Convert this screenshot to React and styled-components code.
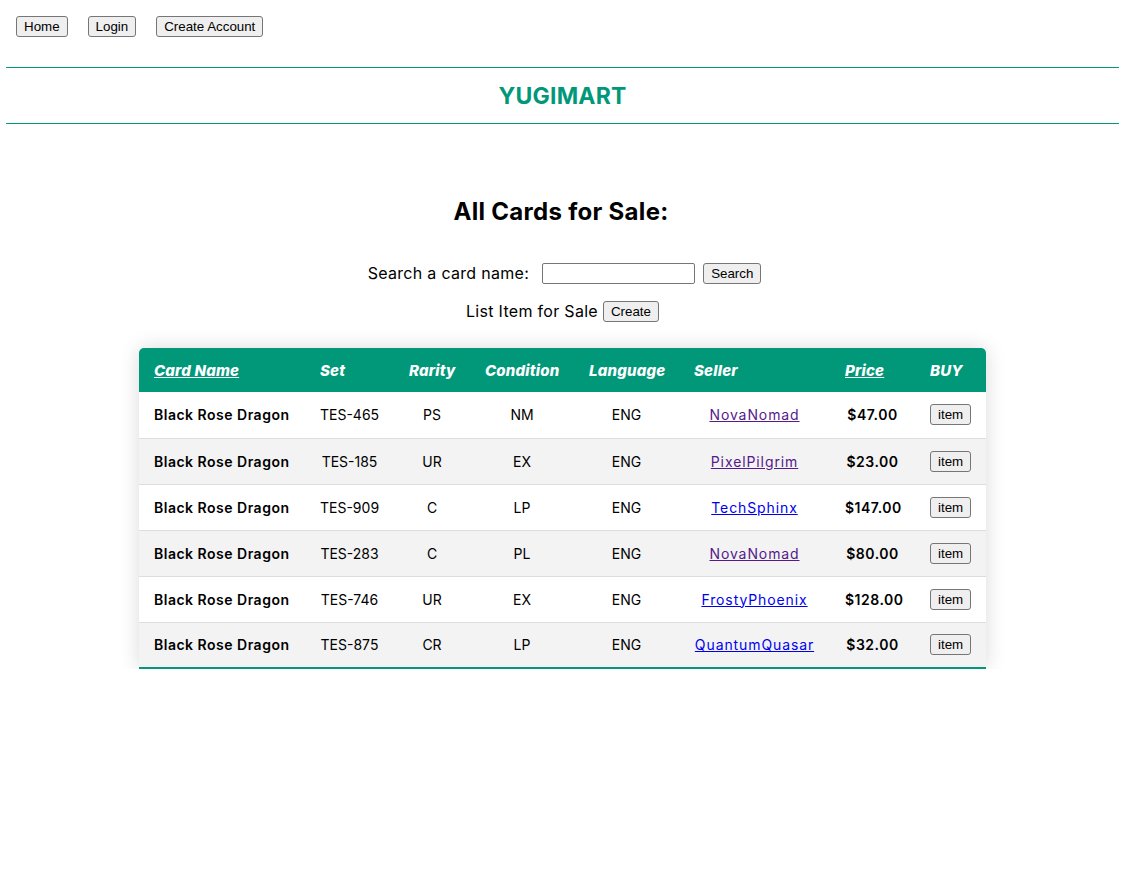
import React from "react";
import styled, { createGlobalStyle } from "styled-components";

const GlobalStyle = createGlobalStyle`
  html, body { margin: 0; padding: 0; background: #ffffff; }
  body {
    font-family: Inter, "Open Sans", "Liberation Sans", sans-serif;
    color: #000000;
  }
`;

const TEAL = "#009879";

const Nav = styled.nav`
  display: flex;
  gap: 20px;
  padding: 16px 16px 30px 16px;
`;

const NativeButton = styled.button`
  font-family: "Liberation Sans", Arial, sans-serif;
  font-size: 13.33px;
  line-height: 15px;
  height: 21px;
  padding: 1px 7px;
  border: 1px solid #767676;
  border-radius: 3px;
  background: #efefef;
  color: #000000;
  cursor: pointer;
  box-sizing: border-box;
`;

const Banner = styled.header`
  margin: 0 3px 0 6px;
  height: 55px;
  border-top: 1px solid ${TEAL};
  border-bottom: 1px solid ${TEAL};
  display: flex;
  align-items: center;
  justify-content: center;
`;

const Brand = styled.h1`
  margin: 0;
  font-size: 23px;
  font-weight: 700;
  color: ${TEAL};
  letter-spacing: 0.2px;
`;

const Main = styled.main`
  display: flex;
  flex-direction: column;
  align-items: center;
`;

const Title = styled.h2`
  margin: 70px 0 0 0;
  font-size: 24px;
  line-height: 36px;
  font-weight: 700;
  letter-spacing: 0.3px;
`;

const FormRow = styled.div`
  display: flex;
  align-items: center;
  justify-content: center;
  gap: ${(p) => p.$gap || 8}px;
  margin-top: ${(p) => p.$top || 0}px;
  margin-left: ${(p) => p.$shift || 0}px;
  height: 22px;
  font-size: 16px;
  letter-spacing: 0.3px;
`;

const Label = styled.span`
  margin-right: ${(p) => p.$extra || 0}px;
`;

const TextInput = styled.input`
  width: 153px;
  height: 21px;
  box-sizing: border-box;
  border: 1px solid #767676;
  border-radius: 2px;
  padding: 1px 2px;
  font-size: 13.33px;
`;

const Table = styled.table`
  margin: 26px 0 0 3px;
  width: 847px;
  table-layout: fixed;
  border-collapse: collapse;
  border-radius: 5px 5px 0 0;
  overflow: hidden;
  box-shadow: 0 0 20px rgba(0, 0, 0, 0.15);
  font-size: 14px;
`;

const HeadRow = styled.tr`
  background: ${TEAL};
  color: #ffffff;
  height: 44px;
`;

const Th = styled.th`
  padding: 0 15px;
  text-align: left;
  font-size: 15px;
  font-weight: 800;
  font-style: italic;
  letter-spacing: 0.2px;
  text-decoration: ${(p) => (p.$sort ? "underline" : "none")};
  white-space: nowrap;
`;

const BodyRow = styled.tr`
  height: 46px;
  background: ${(p) => (p.$even ? "#f3f3f3" : "#ffffff")};
  border-bottom: ${(p) => (p.$last ? `2px solid ${TEAL}` : "1px solid #dddddd")};
`;

const Td = styled.td`
  padding: 0 15px;
  text-align: ${(p) => (p.$left ? "left" : "center")};
  font-weight: ${(p) => (p.$bold ? 600 : 400)};
  letter-spacing: ${(p) => (p.$bold ? "0.5px" : "0")};
  white-space: nowrap;
`;

const SellerLink = styled.a`
  color: ${(p) => (p.$visited ? "#551a8b" : "#0000ee")};
  text-decoration: underline;
  letter-spacing: 0.9px;
`;

const widths = [166, 89, 76, 104, 105, 151, 85, 71];

const rows = [
  { set: "TES-465", rarity: "PS", cond: "NM", seller: "NovaNomad", visited: true, price: "$47.00" },
  { set: "TES-185", rarity: "UR", cond: "EX", seller: "PixelPilgrim", visited: true, price: "$23.00" },
  { set: "TES-909", rarity: "C", cond: "LP", seller: "TechSphinx", visited: false, price: "$147.00" },
  { set: "TES-283", rarity: "C", cond: "PL", seller: "NovaNomad", visited: true, price: "$80.00" },
  { set: "TES-746", rarity: "UR", cond: "EX", seller: "FrostyPhoenix", visited: false, price: "$128.00" },
  { set: "TES-875", rarity: "CR", cond: "LP", seller: "QuantumQuasar", visited: false, price: "$32.00" },
];

export default function App() {
  return (
    <>
      <GlobalStyle />
      <Nav>
        <NativeButton>Home</NativeButton>
        <NativeButton>Login</NativeButton>
        <NativeButton>Create Account</NativeButton>
      </Nav>
      <Banner>
        <Brand>YUGIMART</Brand>
      </Banner>
      <Main>
        <Title>All Cards for Sale:</Title>
        <FormRow $top={32} $gap={8} $shift={7}>
          <Label $extra={5}>Search a card name:</Label>
          <TextInput type="text" />
          <NativeButton>Search</NativeButton>
        </FormRow>
        <FormRow $top={16} $gap={5} $shift={3}>
          <Label>List Item for Sale</Label>
          <NativeButton>Create</NativeButton>
        </FormRow>
        <Table>
          <colgroup>
            {widths.map((w, i) => (
              <col key={i} style={{ width: w }} />
            ))}
          </colgroup>
          <thead>
            <HeadRow>
              <Th $sort>Card Name</Th>
              <Th>Set</Th>
              <Th>Rarity</Th>
              <Th>Condition</Th>
              <Th>Language</Th>
              <Th>Seller</Th>
              <Th $sort>Price</Th>
              <Th>BUY</Th>
            </HeadRow>
          </thead>
          <tbody>
            {rows.map((r, i) => (
              <BodyRow key={i} $even={i % 2 === 1} $last={i === rows.length - 1}>
                <Td $left $bold>Black Rose Dragon</Td>
                <Td>{r.set}</Td>
                <Td>{r.rarity}</Td>
                <Td>{r.cond}</Td>
                <Td>ENG</Td>
                <Td>
                  <SellerLink href="#" $visited={r.visited}>{r.seller}</SellerLink>
                </Td>
                <Td $bold>{r.price}</Td>
                <Td>
                  <NativeButton>item</NativeButton>
                </Td>
              </BodyRow>
            ))}
          </tbody>
        </Table>
      </Main>
    </>
  );
}
